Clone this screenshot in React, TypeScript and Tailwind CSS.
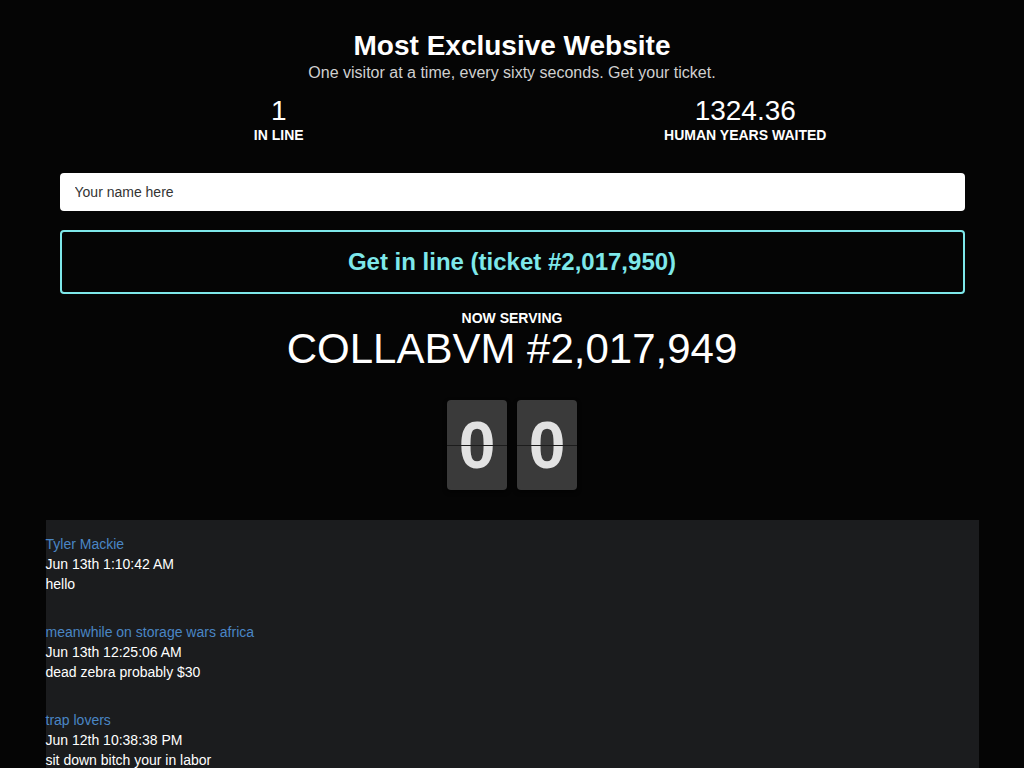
import { useState } from "react";

const messages = [
	{ name: "Tyler Mackie", date: "Jun 13th 1:10:42 AM", text: "hello" },
	{
		name: "meanwhile on storage wars africa",
		date: "Jun 13th 12:25:06 AM",
		text: "dead zebra probably $30",
	},
	{ name: "trap lovers", date: "Jun 12th 10:38:38 PM", text: "sit down bitch your in labor" },
];

function FlipDigit({ digit }: { digit: string }) {
	return (
		<div className="relative flex h-[90px] w-[60px] items-center justify-center rounded-[4px] bg-[#3a3a3a] shadow-[0_2px_4px_rgba(0,0,0,0.6)]">
			<span className="text-[66px] font-bold leading-none text-[#e2e2e2]">{digit}</span>
			<div className="absolute left-0 right-0 top-[45px] h-px bg-[#1c1c1c]" />
		</div>
	);
}

export default function App() {
	const [name, setName] = useState("");

	return (
		<div className="min-h-screen bg-[#050505] font-['Liberation_Sans',Arial,sans-serif] text-white">
			<div className="mx-auto flex w-[933px] flex-col items-center pt-[31px]">
				<h1 className="text-[28px] font-bold leading-[30px]">Most Exclusive Website</h1>
				<p className="mt-[2px] text-[16px] leading-[20px] text-[#d0d0d0]">
					One visitor at a time, every sixty seconds. Get your ticket.
				</p>

				<div className="mt-[12px] grid w-full grid-cols-2">
					<div className="flex flex-col items-center">
						<div className="text-[28px] leading-[32px]">1</div>
						<div className="text-[14px] font-bold leading-[16px]">IN LINE</div>
					</div>
					<div className="flex flex-col items-center">
						<div className="text-[28px] leading-[32px]">1324.36</div>
						<div className="text-[14px] font-bold leading-[16px]">HUMAN YEARS WAITED</div>
					</div>
				</div>

				<div className="flex w-full flex-col px-[14px]">
					<input
						type="text"
						value={name}
						placeholder="Your name here"
						onChange={(e) => setName(e.target.value)}
						className="mt-[30px] h-[38px] w-full rounded-[4px] bg-white px-[15px] text-[14px] text-[#222] outline-none placeholder:text-[#333]"
					/>
					<button className="mt-[19px] h-[64px] w-full rounded-[4px] border-2 border-[#7ee8ea] text-[24px] font-bold text-[#7ee8ea]">
						Get in line (ticket #2,017,950)
					</button>
				</div>

				<div className="mt-[16px] text-[14px] font-bold leading-[16px]">NOW SERVING</div>
				<div className="text-[42px] leading-[46px]">COLLABVM #2,017,949</div>

				<div className="mt-[28px] flex gap-[10px]">
					<FlipDigit digit="0" />
					<FlipDigit digit="0" />
				</div>

				<div className="mt-[30px] flex w-full flex-col gap-[28px] bg-[#1b1c1e] pb-[20px] pt-[14px] text-[14px] leading-[20px]">
					{messages.map((m) => (
						<div key={m.name} className="flex flex-col">
							<div className="text-[#4a86c5]">{m.name}</div>
							<div>{m.date}</div>
							<div>{m.text}</div>
						</div>
					))}
				</div>
			</div>
		</div>
	);
}
